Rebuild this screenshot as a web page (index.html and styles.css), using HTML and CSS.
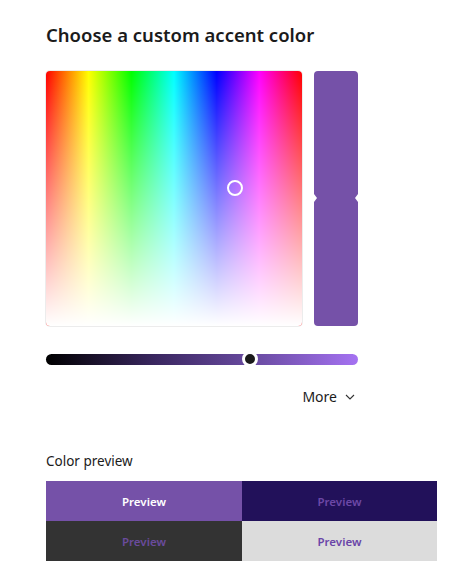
FILE: index.html
```html
<!DOCTYPE html>
<html lang="en">
<head>
    <meta charset="UTF-8">
    <title>Custom accent color</title>
    <link rel="stylesheet" href="styles.css">
</head>
<body>

<div class="picker">
    <h1 class="title">Choose a custom accent color</h1>

    <div class="picker-top">
        <div class="spectrum">
            <div class="spectrum-fade"></div>
            <span class="spectrum-handle"></span>
        </div>
        <div class="swatch">
            <div class="swatch-half"></div>
            <div class="swatch-half"></div>
        </div>
    </div>

    <div class="value-slider">
        <span class="value-thumb"></span>
    </div>

    <div class="more-row">
        <button class="more-btn">More
            <svg width="12" height="12" viewBox="0 0 12 12"><path d="M2 4 L6 8 L10 4" fill="none" stroke="#333" stroke-width="1.1"/></svg>
        </button>
    </div>

    <div class="preview-label">Color preview</div>
    <div class="preview-grid">
        <div class="cell cell-accent">Preview</div>
        <div class="cell cell-deep">Preview</div>
        <div class="cell cell-dark">Preview</div>
        <div class="cell cell-light">Preview</div>
    </div>
</div>

</body>
</html>
```

FILE: styles.css
```css
body {
    margin: 0;
    padding: 0;
    background-color: #fff;
    font-family: "Noto Sans", "Open Sans", sans-serif;
    color: #1b1b1b;
}
.picker {
    padding: 22px 0 0 46px;
    width: 391px;
}
.title {
    font-size: 18.5px;
    font-weight: 600;
    margin: 0 0 23px 0;
    line-height: 26px;
}
.picker-top {
    display: flex;
    gap: 12px;
    width: 312px;
}
.spectrum {
    position: relative;
    width: 256px;
    height: 255px;
    border-radius: 4px;
    overflow: hidden;
    background: linear-gradient(to right, #f00 0%, #ff0 16.67%, #0f0 33.33%, #0ff 50%, #00f 66.67%, #f0f 83.33%, #f00 100%);
    box-shadow: 0 0 0 1px #ececec;
}
.spectrum-fade {
    width: 100%;
    height: 100%;
    background: linear-gradient(to bottom, rgba(255,255,255,0) 0%, rgba(255,255,255,0.55) 55%, #fff 100%);
}
.spectrum-handle {
    position: absolute;
    left: 181px;
    top: 109px;
    width: 12px;
    height: 12px;
    border: 2px solid #fff;
    border-radius: 50%;
}
.swatch {
    width: 44px;
    height: 255px;
    display: flex;
    flex-direction: column;
    border-radius: 4px;
    overflow: hidden;
    position: relative;
}
.swatch-half {
    flex: 1;
    background-color: #7551a8;
}
.swatch::before, .swatch::after {
    content: "";
    position: absolute;
    top: 123px;
    border-top: 4px solid transparent;
    border-bottom: 4px solid transparent;
}
.swatch::before {
    left: 0;
    border-left: 3px solid #fff;
}
.swatch::after {
    right: 0;
    border-right: 3px solid #fff;
}
.value-slider {
    position: relative;
    width: 312px;
    height: 11px;
    margin-top: 28px;
    border-radius: 6px;
    background: linear-gradient(to right, #000 0%, #3a2760 35%, #6f4fa9 70%, #a572f2 100%);
}
.value-thumb {
    position: absolute;
    left: 196px;
    top: -3px;
    width: 10px;
    height: 10px;
    border: 3px solid #fff;
    border-radius: 50%;
    background-color: #1a1a1a;
}
.more-row {
    display: flex;
    justify-content: flex-end;
    width: 312px;
    margin-top: 22px;
}
.more-btn {
    display: flex;
    align-items: center;
    gap: 7px;
    border: none;
    background: none;
    padding: 0 2px 0 0;
    font-family: "Noto Sans", "Open Sans", sans-serif;
    font-size: 14px;
    color: #1b1b1b;
}
.preview-label {
    margin-top: 45px;
    font-size: 13.5px;
    line-height: 20px;
}
.preview-grid {
    display: grid;
    grid-template-columns: 196px 195px;
    grid-template-rows: 40px 40px;
    margin-top: 10px;
}
.cell {
    display: flex;
    align-items: center;
    justify-content: center;
    font-size: 11.5px;
    font-weight: 600;
}
.cell-accent {
    background-color: #7551a8;
    color: #fff;
}
.cell-deep {
    background-color: #22115a;
    color: #6c48a6;
}
.cell-dark {
    background-color: #333;
    color: #6a4b9c;
}
.cell-light {
    background-color: #dcdcdc;
    color: #6a45a8;
}
```
